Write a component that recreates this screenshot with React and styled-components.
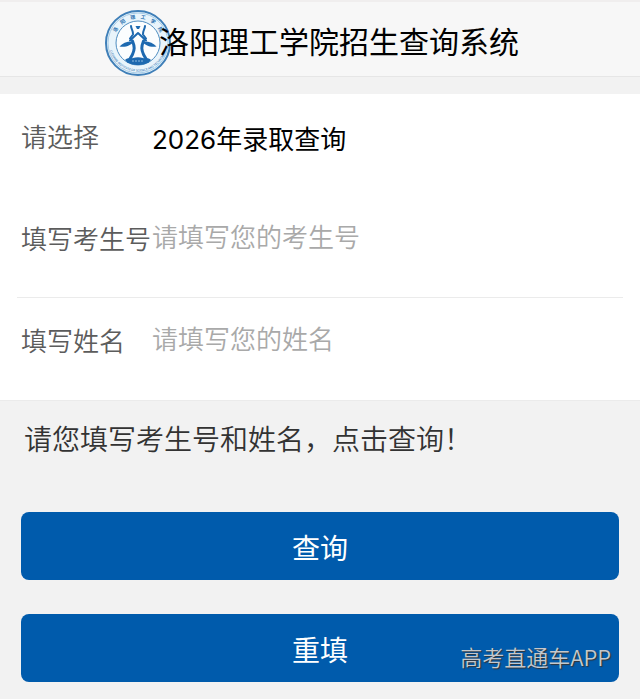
import React, { useState } from 'react'
import styled, { createGlobalStyle } from 'styled-components'

const App = () => {
  const [type, setType] = useState('2026')
  const [numero, setNumero] = useState('')
  const [nom, setNom] = useState('')

  const handleSubmit = (e) => {
    e.preventDefault();
  };

  const handleReset = () => {
    setType('2026')
    setNumero('')
    setNom('')
  };

  return (
    <>
      <GlobalStyle />
      <Page>
        <Header>
          <Logo />
          <Title>洛阳理工学院招生查询系统</Title>
        </Header>

        <form onSubmit={handleSubmit} onReset={handleReset}>
          <Fields>
            <Row>
              <Label htmlFor="type">请选择</Label>
              <Select id="type" value={type} onChange={(e) => setType(e.target.value)}>
                <option value="2026">2026年录取查询</option>
              </Select>
            </Row>
            <Row $line>
              <Label htmlFor="numero">填写考生号</Label>
              <Input
                type="text"
                id="numero"
                placeholder="请填写您的考生号"
                value={numero}
                onChange={(e) => setNumero(e.target.value)}
              />
            </Row>
            <Row>
              <Label htmlFor="nom">填写姓名</Label>
              <Input
                type="text"
                id="nom"
                placeholder="请填写您的姓名"
                value={nom}
                onChange={(e) => setNom(e.target.value)}
              />
            </Row>
          </Fields>

          <Hint>请您填写考生号和姓名，点击查询！</Hint>

          <Actions>
            <Button type="submit">查询</Button>
            <Button type="reset">重填</Button>
          </Actions>
        </form>

        <Watermark>高考直通车APP</Watermark>
      </Page>
    </>
  )
}

const Logo = () => (
  <LogoSvg viewBox="0 0 66 66" aria-hidden="true">
    <defs>
      <path id="arcTop" d="M8.500 33a24.500 24.500 0 0 1 49 0" />
      <path id="arcBottom" d="M4.500 28a28.900 28.900 0 1 0 57 0" />
    </defs>
    <circle cx="33" cy="33" r="32" fill="#e9f4fb" stroke="#3f7fb8" strokeWidth="2" />
    <circle cx="33" cy="33" r="30" fill="none" stroke="#a5cbe6" strokeWidth="1" />
    <circle cx="33" cy="33" r="22" fill="#fbfdfe" stroke="#4f8dc0" strokeWidth="1" />
    <text fontSize="5" fontWeight="700" fill="#2f74b2" textAnchor="middle">
      <textPath href="#arcTop" startOffset="50%">{'洛\u2003阳\u2003理\u2003工\u2003学\u2003院'}</textPath>
    </text>
    <text fontSize="3" fontWeight="500" fill="#3a7ab5" textAnchor="middle">
      <textPath href="#arcBottom" startOffset="50%">LUOYANG INSTITUTE OF SCIENCE AND TECHNOLOGY</textPath>
    </text>
    <g fill="none" stroke="#1d69b0" strokeWidth="2" strokeLinecap="round" strokeLinejoin="round">
      <path d="M26 16c0 3 2.500 5 2 8.500l-3 4" />
      <path d="M40 16c0 3-2.500 5-2 8.500l3 4" />
      <path d="M25 30.500l8-7.500 8 7.500" />
      <path d="M27.500 31c2.500 6 2 9 0 13.500l-4 7" strokeWidth="3" />
      <path d="M38.500 31c-2.500 6-2 9 0 13.500l4 7" strokeWidth="3" />
    </g>
    <g fill="#1d69b0">
      <path d="M14.500 36.500c3-3.500 8-5.500 14-5-2 4-8 6-14 5z" />
      <path d="M51.500 36.500c-3-3.500-8-5.500-14-5 2 4 8 6 14 5z" />
      <path d="M30.500 16h5l-1.500 3h-2z" />
      <path d="M20 50c3-3 6-1 8-2 3-1 7-1 10 0 2 1 5-1 8 2-3 4-8 5-13 5s-10-1-13-5z" />
    </g>
    <path d="M27 51h12" stroke="#8dbbe0" strokeDasharray="2 1" />
  </LogoSvg>
)

const GlobalStyle = createGlobalStyle`
  * {
    box-sizing: border-box;
  }
  body {
    margin: 0;
    background: #f2f2f2;
    font-family: 'Noto Sans CJK SC', sans-serif;
    font-weight: 350;
  }
`
const Page = styled.div`
  position: relative;
  padding-bottom: 17px;
`
const Header = styled.header`
  display: flex;
  justify-content: center;
  align-items: flex-start;
  padding: 8px 16px 0 0;
  margin-bottom: 17px;
  background: #f7f7f7;
  border-top: 2px solid #f0eeee;
  border-bottom: 1px solid #e6e6e6;
`
const LogoSvg = styled.svg`
  flex: none;
  width: 66px;
  height: 66px;
  margin-right: -12px;
`
const Title = styled.h1`
  position: relative;
  margin: 0;
  color: #000;
  font-size: 30px;
  font-weight: 400;
  line-height: 60px;
  white-space: nowrap;
`
const Fields = styled.div`
  padding: 0 17px;
  background: #fff;
  border-bottom: 1px solid #ebebeb;
`
const Row = styled.div`
  display: flex;
  align-items: center;
  padding: 24px 4px 41px;
  border-bottom: 1px solid ${(props) => (props.$line ? '#ebebeb' : 'transparent')};
`
const Label = styled.label`
  flex: none;
  width: 131px;
  color: #5c5c5c;
  font-size: 26px;
  line-height: 36px;
  white-space: nowrap;
`
const Select = styled.select`
  flex: 1;
  min-width: 0;
  height: 36px;
  padding: 8px 0 0;
  border: none;
  outline: none;
  appearance: none;
  background: transparent;
  color: #000;
  font-family: Inter, 'Noto Sans CJK SC', sans-serif;
  font-size: 26px;
  font-weight: 400;
  line-height: 28px;
`
const Input = styled.input`
  flex: 1;
  min-width: 0;
  height: 36px;
  padding: 0 0 6px;
  border: none;
  outline: none;
  background: transparent;
  color: #000;
  font-family: inherit;
  font-size: 26px;
  font-weight: inherit;
  line-height: 30px;

  &::placeholder {
    color: #a9a9a9;
    opacity: 1;
  }
`
const Hint = styled.p`
  margin: 0;
  padding: 18px 24px 55px;
  color: #333;
  font-size: 28px;
  line-height: 38px;
`
const Actions = styled.div`
  display: flex;
  flex-direction: column;
  gap: 34px;
  padding: 0 21px;
`
const Button = styled.button`
  height: 68px;
  padding: 2px 0 0;
  border: none;
  border-radius: 8px;
  background: #005bac;
  color: #fff;
  font-family: inherit;
  font-size: 28px;
  font-weight: 400;
  cursor: pointer;
`
const Watermark = styled.span`
  position: absolute;
  right: 29px;
  bottom: 27px;
  color: #c4c8cc;
  font-size: 22px;
  line-height: 32px;
  text-shadow: 1px 1px 1px #333;
  pointer-events: none;
`

export default App;
